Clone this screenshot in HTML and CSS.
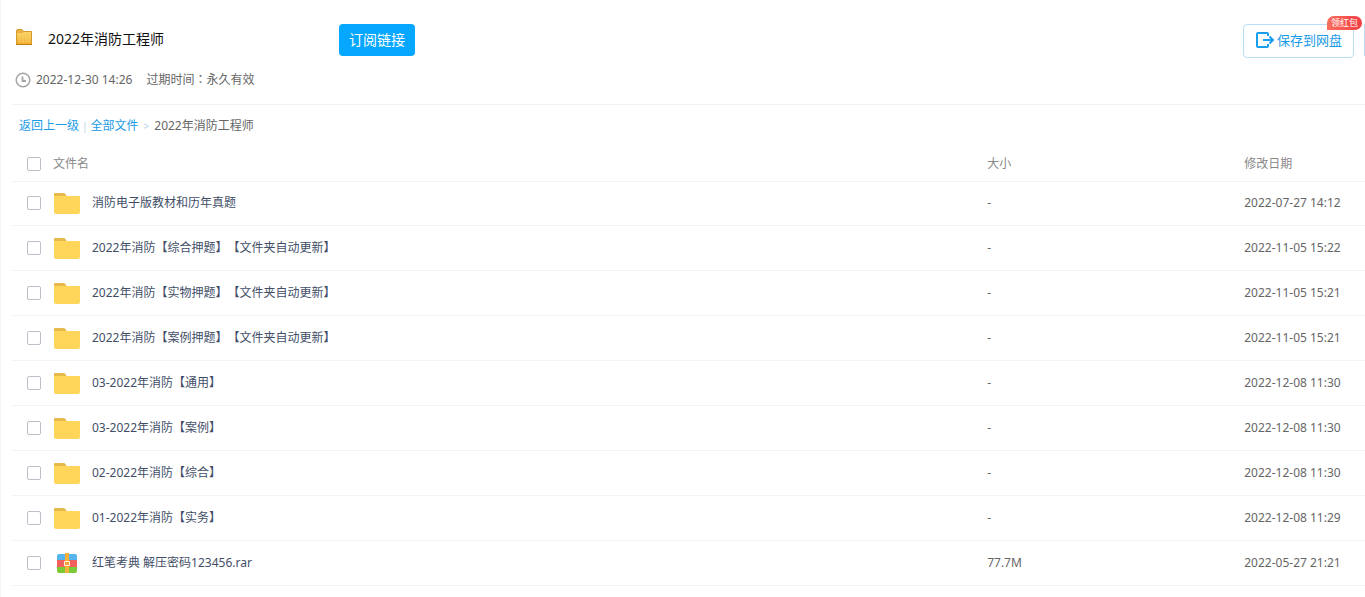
FILE: index.html
```html
<!DOCTYPE html>
<html lang="zh-CN">
<head>
    <meta charset="UTF-8">
    <meta name="viewport" content="width=device-width, initial-scale=1.0">
    <title>2022年消防工程师</title>
    <link rel="stylesheet" href="styles.css">
</head>
<body>
    <svg class="icon-defs" aria-hidden="true">
        <symbol id="folder" viewBox="0 0 26 22">
            <path d="M0 5V2Q0 1 1 1H10Q11 1 12 3L13 5Z" fill="#e6b94c"/>
            <path d="M0 4H25Q26 4 26 5V20Q26 22 24 22H2Q0 22 0 20Z" fill="#ffd55a"/>
        </symbol>
    </svg>

    <div class="share">
        <header class="share-header">
            <div class="title-row">
                <svg class="title-icon" viewBox="0 0 16 16">
                    <defs>
                        <linearGradient id="gold" x1="0" y1="0" x2="0" y2="1">
                            <stop offset="0" stop-color="#fbd468"/>
                            <stop offset="1" stop-color="#f0ae2c"/>
                        </linearGradient>
                    </defs>
                    <path d="M.5 15V1.500Q.5 .5 1.500 .5H6L7.500 2.500H15.500V15.500H.5Z" fill="#e8b040" stroke="#d49a2c"/>
                    <path d="M1 4H7L8 3H15V15H1Z" fill="url(#gold)"/>
                    <path d="M4 6V14M7 6V14M10 6V14M13 6V14" stroke="#fbd77c" stroke-width=".7"/>
                    <path d="M0 15.500H16" stroke="#c17d15"/>
                </svg>
                <h1>2022年消防工程师</h1>
                <button class="btn-subscribe" type="button">订阅链接</button>
            </div>
            <div class="actions">
                <button class="btn-save" type="button">
                    <svg viewBox="0 0 20 18" fill="none" stroke="#1a9ff0" stroke-width="2">
                        <path d="M13 5V3Q13 2 12 2H3Q2 2 2 3V15Q2 16 3 16H12Q13 16 13 15V13"/>
                        <path d="M8 9H18M14.500 5.500L18 9L14.500 12.500"/>
                    </svg>
                    保存到网盘
                    <span class="badge">领红包</span>
                </button>
                <span class="next-edge"></span>
            </div>
        </header>

        <div class="share-info">
            <svg viewBox="0 0 16 16" fill="none" stroke="#a5a5a5">
                <circle cx="8" cy="8" r="6.800" stroke-width="1.500"/>
                <path d="M7.500 4.500V9H11" stroke-width="1.800"/>
            </svg>
            <span class="share-time">2022-12-30 14:26</span>
            <span>过期时间<span class="colon" lang="zh-TW">：</span>永久有效</span>
        </div>

        <nav class="crumbs">
            <a href="#">返回上一级</a>
            <span class="sep">|</span>
            <a href="#">全部文件</a>
            <span class="sep arrow">&gt;</span>
            <span>2022年消防工程师</span>
        </nav>

        <table class="files">
            <thead>
                <tr>
                    <th class="col-name"><div class="name-cell"><input type="checkbox" id="all"><label for="all">文件名</label></div></th>
                    <th class="col-size">大小</th>
                    <th class="col-date">修改日期</th>
                </tr>
            </thead>
            <tbody>
                <tr>
                    <td><div class="name-cell"><input type="checkbox" id="f1"><svg class="file-icon"><use href="#folder"/></svg><label for="f1">消防电子版教材和历年真题</label></div></td>
                    <td>-</td>
                    <td>2022-07-27 14:12</td>
                </tr>
                <tr>
                    <td><div class="name-cell"><input type="checkbox" id="f2"><svg class="file-icon"><use href="#folder"/></svg><label for="f2">2022年消防【综合押题】【文件夹自动更新】</label></div></td>
                    <td>-</td>
                    <td>2022-11-05 15:22</td>
                </tr>
                <tr>
                    <td><div class="name-cell"><input type="checkbox" id="f3"><svg class="file-icon"><use href="#folder"/></svg><label for="f3">2022年消防【实物押题】【文件夹自动更新】</label></div></td>
                    <td>-</td>
                    <td>2022-11-05 15:21</td>
                </tr>
                <tr>
                    <td><div class="name-cell"><input type="checkbox" id="f4"><svg class="file-icon"><use href="#folder"/></svg><label for="f4">2022年消防【案例押题】【文件夹自动更新】</label></div></td>
                    <td>-</td>
                    <td>2022-11-05 15:21</td>
                </tr>
                <tr>
                    <td><div class="name-cell"><input type="checkbox" id="f5"><svg class="file-icon"><use href="#folder"/></svg><label for="f5">03-2022年消防【通用】</label></div></td>
                    <td>-</td>
                    <td>2022-12-08 11:30</td>
                </tr>
                <tr>
                    <td><div class="name-cell"><input type="checkbox" id="f6"><svg class="file-icon"><use href="#folder"/></svg><label for="f6">03-2022年消防【案例】</label></div></td>
                    <td>-</td>
                    <td>2022-12-08 11:30</td>
                </tr>
                <tr>
                    <td><div class="name-cell"><input type="checkbox" id="f7"><svg class="file-icon"><use href="#folder"/></svg><label for="f7">02-2022年消防【综合】</label></div></td>
                    <td>-</td>
                    <td>2022-12-08 11:30</td>
                </tr>
                <tr>
                    <td><div class="name-cell"><input type="checkbox" id="f8"><svg class="file-icon"><use href="#folder"/></svg><label for="f8">01-2022年消防【实务】</label></div></td>
                    <td>-</td>
                    <td>2022-12-08 11:29</td>
                </tr>
                <tr>
                    <td><div class="name-cell"><input type="checkbox" id="f9">
                        <svg class="file-icon" viewBox="0 0 26 22">
                            <path d="M3 8V4Q3 2 5 2H21Q23 2 23 4V8Z" fill="#56b4ee"/>
                            <path d="M3 8H23V15H3Z" fill="#f0605c"/>
                            <path d="M3 15H23V19Q23 21 21 21H5Q3 21 3 19Z" fill="#7cc936"/>
                            <path d="M11 1H15V21H11Z" fill="#f5b13c"/>
                            <path d="M10.500 9.500H15.500V13.500H10.500Z" fill="#f5a13c" stroke="#fff3d8"/>
                        </svg>
                        <label for="f9">红笔考典 解压密码123456.rar</label></div></td>
                    <td>77.7M</td>
                    <td>2022-05-27 21:21</td>
                </tr>
            </tbody>
        </table>
    </div>
</body>
</html>
```
FILE: styles.css
```css
* {
    box-sizing: border-box;
}

body {
    margin: 0;
    background: #fff;
    color: #666;
    font-family: "Noto Sans", "Noto Sans CJK SC", sans-serif;
    font-size: 12px;
    line-height: 18px;
    text-spacing-trim: space-all;
    overflow: hidden;
}

button,
input {
    font-family: inherit;
    margin: 0;
}

a {
    color: #1a9be6;
    text-decoration: none;
}

.icon-defs {
    display: none;
}

.share {
    min-height: 100vh;
    border-left: 1px solid #f4f4f6;
    padding-left: 11px;
}

.share-header {
    display: flex;
    justify-content: space-between;
    align-items: flex-start;
    padding-top: 24px;
}

.title-row {
    display: flex;
    align-items: center;
    height: 32px;
    padding-left: 4px;
}

.title-icon {
    width: 16px;
    height: 16px;
    margin: 0 16px 6px 0;
}

h1 {
    width: 291px;
    margin: 0;
    padding-bottom: 2px;
    color: #111;
    font-size: 14px;
    font-weight: 400;
    line-height: 20px;
}

.btn-subscribe {
    height: 32px;
    padding: 0 10px;
    border: 0;
    border-radius: 4px;
    background: #06a7ff;
    color: #fff;
    font-size: 14px;
    line-height: 20px;
    cursor: pointer;
}

.actions {
    display: flex;
    gap: 10px;
}

.btn-save {
    position: relative;
    display: flex;
    align-items: center;
    gap: 2px;
    height: 34px;
    padding: 0 11px 3px;
    border: 1px solid #b9dff8;
    border-radius: 4px;
    background: #fff;
    color: #1a9be6;
    font-size: 13px;
    cursor: pointer;
}

.btn-save svg {
    width: 20px;
    height: 18px;
}

.badge {
    position: absolute;
    top: -9px;
    right: -9px;
    padding: 0 4px;
    border-radius: 7px 7px 7px 0;
    background: linear-gradient(90deg, #fa6f5c, #f23e45);
    color: #fff;
    font-size: 9px;
    line-height: 14px;
}

.next-edge {
    width: 1px;
    height: 32px;
    background: #b9dff8;
}

.share-info {
    display: flex;
    align-items: center;
    height: 47px;
    padding: 0 0 2px 3px;
    border-bottom: 1px solid #f2f2f2;
}

.share-info svg {
    width: 16px;
    height: 16px;
    margin-right: 5px;
}

.share-time {
    margin-right: 14px;
}

/* full-width colon sits in the middle of its box */
.colon {
    font-family: "Noto Sans CJK TC", sans-serif;
    line-height: 1;
}

.crumbs {
    display: flex;
    align-items: center;
    height: 42px;
    padding-left: 7px;
}

.sep {
    margin: 0 3px;
    color: #b5d5ea;
    font-size: 10px;
}

.arrow {
    margin: 0 5px;
}

.files {
    width: 100%;
    border-collapse: collapse;
    table-layout: fixed;
}

.col-name {
    width: 72%;
}

.col-size {
    width: 19%;
}

.col-date {
    width: 9%;
}

.files th,
.files td {
    height: 45px;
    padding: 0 1px;
    border-bottom: 1px solid #f3f4f6;
    text-align: left;
    white-space: nowrap;
}

.files th {
    height: 34px;
    color: #888;
    font-weight: 400;
}

.files tbody tr:first-child td {
    height: 44px;
}

.name-cell {
    display: flex;
    align-items: center;
    padding-left: 14px;
}

.name-cell input {
    appearance: none;
    width: 14px;
    height: 14px;
    margin-right: 12px;
    border: 1px solid #bcbec8;
    border-radius: 2px;
    background: #fff;
}

.name-cell input:checked {
    background: #06a7ff;
}

.files td label {
    color: #424e67;
}

.file-icon {
    width: 26px;
    height: 22px;
    margin: 0 12px 0 1px;
}
```
